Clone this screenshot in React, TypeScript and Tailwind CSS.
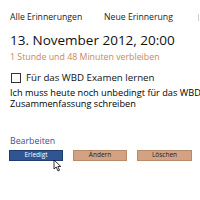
import React from "react";

export default function App() {
  return (
    <div className="relative w-[200px] h-[200px] overflow-hidden bg-white text-black" style={{ fontFamily: '"Open Sans", "Noto Sans", sans-serif' }}>
      <div className="flex items-center pl-[10px] pt-[12px] h-[23px] text-[8.7px] leading-[11px] text-[#222]">
        <span className="w-[94px] whitespace-nowrap">Alle Erinnerungen</span>
        <span className="whitespace-nowrap">Neue Erinnerung</span>
        <span className="ml-auto mr-[1px] w-[1px] h-[7px] bg-[#ccc]"></span>
      </div>
      <div className="pl-[10px] pt-[9px] text-[13.5px] leading-[16px] whitespace-nowrap text-[#111]">13. November 2012, 20:00</div>
      <div className="pl-[10px] pt-[4px] text-[8.8px] leading-[11px] whitespace-nowrap text-[#c8885a]">1 Stunde und 48 Minuten verbleiben</div>
      <div className="flex items-center pl-[11px] pt-[9px] gap-[5px]">
        <span className="w-[10px] h-[10px] border border-[#333] bg-white"></span>
        <span className="text-[9.7px] leading-[12px] whitespace-nowrap text-[#111]">Für das WBD Examen lernen</span>
      </div>
      <div className="pl-[10px] pt-[4px] text-[9.2px] leading-[10.5px] whitespace-nowrap text-[#000]">
        <div>Ich muss heute noch unbedingt für das WBD Examen lernen und die</div>
        <div>Zusammenfassung schreiben</div>
      </div>
      <div className="pl-[10px] pt-[27px] text-[8.8px] leading-[11px] text-[#2f5597]">Bearbeiten</div>
      <div className="flex pl-[9px] pt-[3px] gap-[10px]">
        <div className="w-[54px] h-[11px] bg-[#2f5693] border border-[#1e3c6e] flex items-center justify-center text-[6.5px] leading-none text-white">Erledigt</div>
        <div className="w-[54px] h-[11px] bg-[#d2a283] border border-[#b9896b] flex items-center justify-center text-[6.5px] leading-none text-[#222]">Ändern</div>
        <div className="w-[55px] h-[11px] bg-[#d2a283] border border-[#b9896b] flex items-center justify-center text-[6.5px] leading-none text-[#222]">Löschen</div>
      </div>
      <svg className="absolute left-[53px] top-[159px]" width="9" height="13" viewBox="0 0 9 13">
        <path d="M1 1 L1 10 L3.2 8 L5 12 L6.5 11.3 L4.8 7.5 L7.8 7.5 Z" fill="white" stroke="black" strokeWidth="0.8" strokeLinejoin="round" />
      </svg>
    </div>
  );
}
